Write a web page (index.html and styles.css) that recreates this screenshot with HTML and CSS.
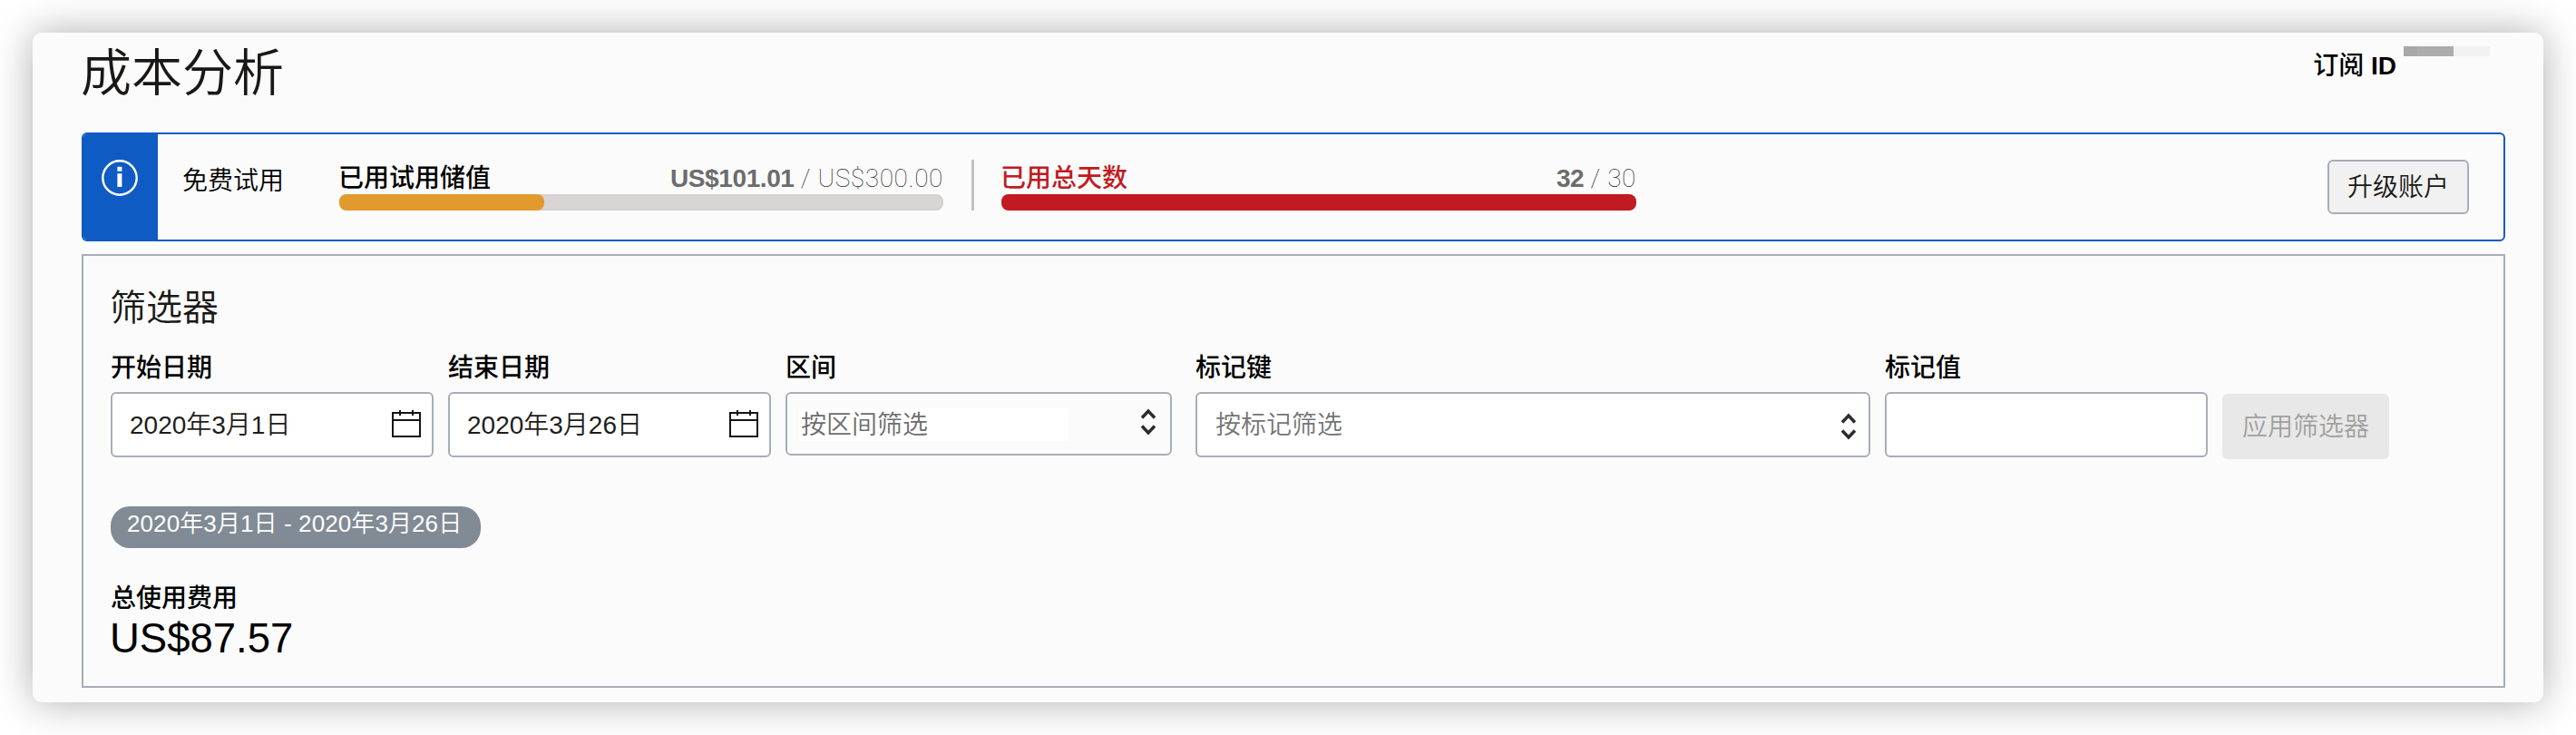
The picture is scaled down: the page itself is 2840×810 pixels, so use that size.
FILE: index.html
```html
<!DOCTYPE html>
<html lang="zh-CN">
<head>
<meta charset="utf-8">
<title>成本分析</title>
<link rel="stylesheet" href="styles.css">
</head>
<body>
<main class="card">
  <header class="header">
    <h1 class="title">成本分析</h1>
    <div class="subscription"><span class="subscription-label">订阅 <b>ID</b></span><span class="redacted"></span></div>
  </header>

  <section class="banner">
    <div class="banner-icon">
      <svg width="40" height="40" viewBox="0 0 40 40"><circle cx="20" cy="20" r="18.7" fill="none" stroke="#fff" stroke-width="2.4"/><rect x="17.4" y="7.8" width="5" height="5" fill="#fff"/><path d="M17.4 15.2h5V30h-5z" fill="#fff"/></svg>
    </div>
    <div class="trial">免费试用</div>
    <div class="meter meter-credit">
      <div class="meter-head"><span class="meter-name">已用试用储值</span><span class="meter-value"><b>US$101.01</b><i> / US$300.00</i></span></div>
      <div class="track"><div class="fill fill-credit" style="width:226px"></div></div>
    </div>
    <div class="divider"></div>
    <div class="meter meter-days">
      <div class="meter-head"><span class="meter-name over">已用总天数</span><span class="meter-value"><b>32</b><i> / 30</i></span></div>
      <div class="track"><div class="fill fill-days" style="width:100%"></div></div>
    </div>
    <button class="btn upgrade">升级账户</button>
  </section>

  <section class="panel">
    <h2 class="panel-title">筛选器</h2>
    <div class="filters">
      <div class="field field-date">
        <label class="label">开始日期</label>
        <div class="input"><span class="date">2020年3月1日</span><svg class="calendar" width="32" height="30" viewBox="0 0 32 30" fill="none" stroke="#161513" stroke-width="2"><path d="M1 3h30v26H1zM1 11h30M9 0v6M23 0v6"/></svg></div>
      </div>
      <div class="field field-date">
        <label class="label">结束日期</label>
        <div class="input"><span class="date">2020年3月26日</span><svg class="calendar" width="32" height="30" viewBox="0 0 32 30" fill="none" stroke="#161513" stroke-width="2"><path d="M1 3h30v26H1zM1 11h30M9 0v6M23 0v6"/></svg></div>
      </div>
      <div class="field field-range">
        <label class="label">区间</label>
        <div class="input select-range"><span class="range-text">按区间筛选</span><svg class="updown" width="18" height="32" viewBox="0 0 18 32" fill="none" stroke="#2b2b2b" stroke-width="3.4"><path d="M2 11.5L9 4l7 7.5M2 20.5L9 28l7-7.5"/></svg></div>
      </div>
      <div class="field field-key">
        <label class="label">标记键</label>
        <div class="input select-key"><span class="placeholder">按标记筛选</span><svg class="updown" width="18" height="32" viewBox="0 0 18 32" fill="none" stroke="#2b2b2b" stroke-width="3.4"><path d="M2 11.5L9 4l7 7.5M2 20.5L9 28l7-7.5"/></svg></div>
      </div>
      <div class="field field-date">
        <label class="label">标记值</label>
        <div class="input"></div>
      </div>
      <button class="btn apply" disabled>应用筛选器</button>
    </div>
    <div class="tag">2020年3月1日 - 2020年3月26日</div>
    <div class="total-label">总使用费用</div>
    <div class="total">US$87.57</div>
  </section>
</main>
</body>
</html>
```
FILE: styles.css
```css
* { box-sizing: border-box; }
body {
  margin: 0;
  padding: 36px;
  height: 810px;
  overflow: hidden;
  background: #fff;
  color: #000;
  font: 350 28px/36px "Liberation Sans", "Noto Sans CJK SC", sans-serif;
  white-space: nowrap;
}
.card {
  height: 738px;
  padding: 0 42px 0 54px;
  border-radius: 10px;
  background: #fbfbfb;
  box-shadow: 0 0 44px rgba(0, 0, 0, .32);
}
.header { display: flex; justify-content: space-between; height: 110px; }
.title { margin: 5px 0 0 -1px; font-size: 56px; line-height: 80px; font-weight: 350; color: #1a1816; }
.subscription { display: flex; gap: 8px; margin: 15px 17px 0 0; }
.subscription-label { margin-top: 4px; font-weight: 500; }
.redacted { width: 95px; height: 11px; background: linear-gradient(90deg, #a7a7a5 15px, #adadad 15px, #adadad 55px, #f2f2f2 55px); }

.banner { display: flex; height: 120px; border: 2px solid #0f5bc4; border-radius: 6px; overflow: hidden; }
.banner-icon { width: 82px; padding: 28px 0 0 20px; background: #0f5bc4; }
.banner-icon svg { display: block; }
.trial { width: 173px; margin: 34px 0 0 27px; }
.meter { margin-top: 31px; }
.meter-credit { width: 666px; }
.meter-days { width: 700px; }
.meter-head { display: flex; justify-content: space-between; height: 35px; }
.meter-name { margin-left: -1px; font-weight: 500; }
.over { color: #c21a21; }
.meter-value { color: #6c6c6b; }
.meter-value b { letter-spacing: -.4px; }
.meter-value i { font-family: Roboto, sans-serif; font-style: normal; font-weight: 100; letter-spacing: .6px; color: #333; }
.track { height: 18px; border: 2px solid #d3d0d0; border-radius: 8px; background: #d8d6d4; }
.fill { height: 18px; margin: -2px; border-radius: 8px; }
.fill-credit { background: #e29a2e; }
.fill-days { box-sizing: content-box; padding-right: 4px; background: #c21a21; }
.divider { width: 3px; height: 56px; margin: 28px 30px 0 31px; background: #c2c2c2; }
.btn { font: inherit; padding: 0; border-radius: 6px; }
.upgrade { width: 156px; height: 60px; margin: 28px 38px 0 auto; padding-top: 2px; border: 2px solid #a7adb9; background: #f1f1f1; color: #1a1816; }

.panel { height: 478px; margin-top: 14px; padding: 29px 30px 0; border: 2px solid #a7adb9; }
.panel-title { margin: 0 0 0 -1px; font-size: 40px; line-height: 56px; font-weight: 350; color: #1a1816; }
.filters { display: flex; height: 191px; padding-top: 21px; }
.label { display: block; height: 44px; font-weight: 500; }
.field { margin-right: 16px; }
.input {
  display: flex;
  justify-content: space-between;
  height: 72px;
  padding: 16px 12px 0 19px;
  border: 2px solid #a7adb9;
  border-radius: 6px;
  background: #fff;
  color: #1f1d1b;
}
.date { padding-top: 1px; }
.calendar { margin-top: 2px; }
.field-date { width: 356px; }
.field-range { width: 426px; margin-right: 26px; }
.field-key { width: 744px; }
.select-range { height: 70px; padding: 16px 15px 0 13px; background: #fbfbfb; }
.range-text { width: 297px; height: 36px; padding-left: 2px; line-height: 37px; background: #fff; color: #6d6d6c; }
.select-key { padding: 16px 13px 0 20px; }
.placeholder { padding-top: 1px; color: #757574; }
.select-key .updown { margin-top: 4px; }
.select-range .updown { margin-top: -1px; }
.apply { width: 184px; height: 72px; margin-top: 46px; padding-top: 2px; border: 0; background: #e8e8e8; color: #a0a09f; }
.tag { width: 408px; height: 46px; padding-left: 18px; border-radius: 21px; background: #818b95; color: #fff; font-size: 26px; line-height: 38px; letter-spacing: .1px; }
.total-label { margin: 38px 0 0; font-weight: 500; }
.total { margin: -1px 0 0 -1px; font-size: 45.5px; line-height: 54px; }
```
